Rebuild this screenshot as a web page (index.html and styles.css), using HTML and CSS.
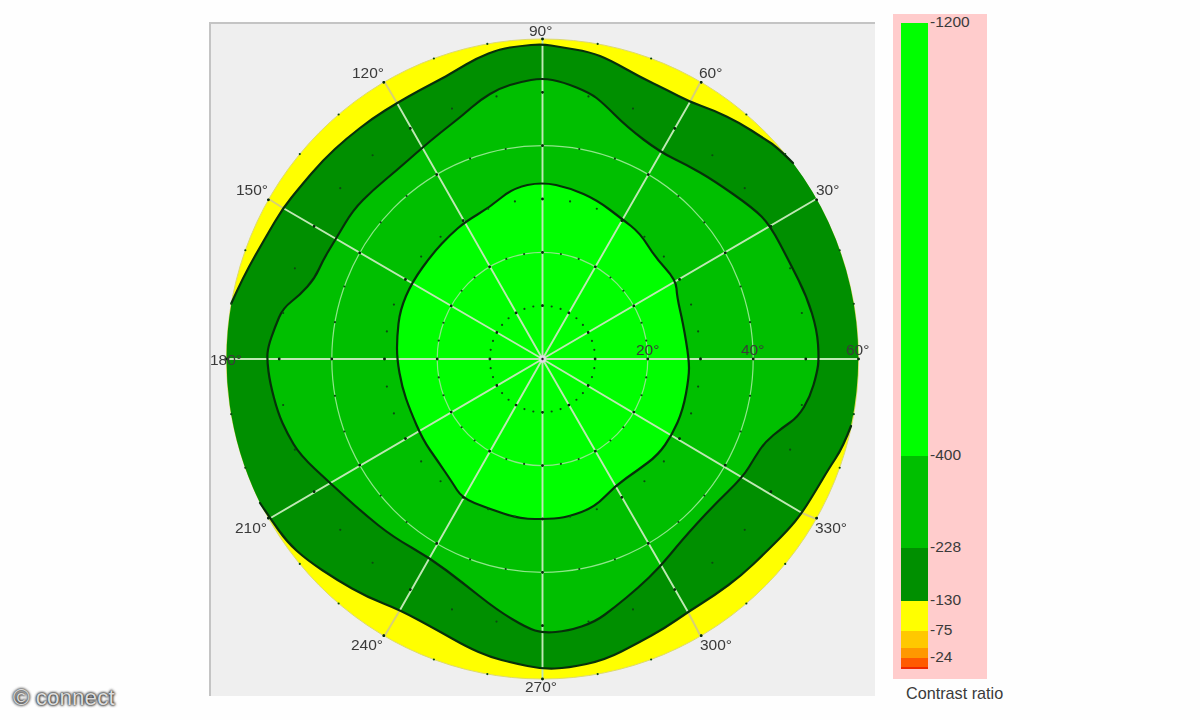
FILE: index.html
```html
<!DOCTYPE html>
<html lang="en">
<head>
<meta charset="utf-8">
<title>Contrast ratio polar plot</title>
<link rel="stylesheet" href="styles.css">
</head>
<body>
<main class="page">
  <figure class="plot">
    <svg class="polar" viewBox="209 22 666 674" width="666" height="674" role="img" aria-label="Polar contrast plot">
      <defs>
        <path id="upper" d="M231.5 303 Q243 277 255 256 Q267 235 275 221.5 Q283 208 291.5 197.5 Q300 187 311.5 173.5 Q323 160 335 149 Q347 138 360 128 Q373 118 385 110.5 Q397 103 408.5 96.5 Q420 90 431.5 84 Q443 78 449 74.5 Q455 71 466 64.5 Q477 58 488.5 53.5 Q500 49 510 47.5 Q520 46 531 45 Q542 44 551 45.5 Q560 47 575 49.5 Q590 52 600 56 Q610 60 625 68.5 Q640 77 653.5 83.5 Q667 90 678.5 96 Q690 102 701.5 106 Q713 110 726.5 116.5 Q740 123 751.5 130.5 Q763 138 770 142.5 Q777 147 793 163"/>
        <path id="lower" d="M851 426 Q843 447 835.5 458.5 Q828 470 823 478.5 Q818 487 810 500 Q802 513 795 521.5 Q788 530 776.5 541.5 Q765 553 753.5 564 Q742 575 728.5 585 Q715 595 701.5 603.5 Q688 612 676.5 620 Q665 628 651.5 635.5 Q638 643 621.5 651.5 Q605 660 586.5 664 Q568 668 555 668.5 Q542 669 527.5 666 Q513 663 501.5 660 Q490 657 478.5 652 Q467 647 452 638.5 Q437 630 418.5 620 Q400 610 383.5 603.5 Q367 597 352 588.5 Q337 580 322 570 Q307 560 297 551 Q287 542 278.5 530 Q270 518 260 503"/>
        <path id="middle" d="M552.5 80 Q542 78 531 80 Q520 82 510 85 Q500 88 490 94 Q480 100 471.5 107.5 Q463 115 451.5 124 Q440 133 431 140.5 Q422 148 409.5 159 Q397 170 385 180 Q373 190 363 200 Q353 210 345 223.5 Q337 237 330 248.5 Q323 260 319 269 Q315 278 307.5 286.5 Q300 295 291.5 301.5 Q283 308 279 317.5 Q275 327 271.5 337 Q268 347 267.5 353.5 Q267 360 268.5 371.5 Q270 383 274 398 Q278 413 282.5 423 Q287 433 293.5 444 Q300 455 315 469 Q330 483 346.5 498 Q363 513 378 525 Q393 537 411.5 547.5 Q430 558 446.5 570.5 Q463 583 480 596.5 Q497 610 512 619 Q527 628 535 630.5 Q543 633 555.5 632 Q568 631 581.5 626.5 Q595 622 605 614.5 Q615 607 626.5 597.5 Q638 588 649 577.5 Q660 567 671 553.5 Q682 540 697 523.5 Q712 507 727.5 492 Q743 477 749 467 Q755 457 760 449.5 Q765 442 773.5 435 Q782 428 790 422.5 Q798 417 804 407 Q810 397 813.5 385 Q817 373 818 365.5 Q819 358 818 344 Q817 330 812 313.5 Q807 297 798.5 280 Q790 263 780 244 Q770 225 761.5 216.5 Q753 208 733 194 Q713 180 700 172.5 Q687 165 673.5 158.5 Q660 152 643.5 139.5 Q627 127 615 115 Q603 103 596.5 98 Q590 93 576.5 87.5 Q563 82 552.5 80 Z"/>
        <path id="inner" d="M556 185 Q542 182 527.5 185 Q513 188 501.5 197.5 Q490 207 477.5 214.5 Q465 222 457.5 228.5 Q450 235 441.5 244 Q433 253 422.5 267.5 Q412 282 406 296 Q400 310 398.5 323.5 Q397 337 397 348 Q397 359 399.5 373 Q402 387 406 398.5 Q410 410 416.5 425 Q423 440 430 450 Q437 460 444.5 471 Q452 482 457 490 Q462 498 474.5 503 Q487 508 503.5 513.5 Q520 519 535 519 Q550 519 559 518 Q568 517 581.5 512 Q595 507 605 496.5 Q615 486 626.5 478 Q638 470 648 462.5 Q658 455 665 445 Q672 435 677.5 422.5 Q683 410 686 393.5 Q689 377 689 368 Q689 359 686 341 Q683 323 680 310 Q677 297 676.5 288.5 Q676 280 665.5 268.5 Q655 257 647.5 245 Q640 233 631 226 Q622 219 609.5 209.5 Q597 200 583.5 194 Q570 188 556 185 Z"/>
      </defs>

      <ellipse class="disc" cx="542.5" cy="359" rx="316" ry="320"/>
      <path class="band-dark" d="M231.5 303 Q243 277 255 256 Q267 235 275 221.5 Q283 208 291.5 197.5 Q300 187 311.5 173.5 Q323 160 335 149 Q347 138 360 128 Q373 118 385 110.5 Q397 103 408.5 96.5 Q420 90 431.5 84 Q443 78 449 74.5 Q455 71 466 64.5 Q477 58 488.5 53.5 Q500 49 510 47.5 Q520 46 531 45 Q542 44 551 45.5 Q560 47 575 49.5 Q590 52 600 56 Q610 60 625 68.5 Q640 77 653.5 83.5 Q667 90 678.5 96 Q690 102 701.5 106 Q713 110 726.5 116.5 Q740 123 751.5 130.5 Q763 138 770 142.5 Q777 147 793 163 A316 320 0 0 1 851 426 Q843 447 835.5 458.5 Q828 470 823 478.5 Q818 487 810 500 Q802 513 795 521.5 Q788 530 776.5 541.5 Q765 553 753.5 564 Q742 575 728.5 585 Q715 595 701.5 603.5 Q688 612 676.5 620 Q665 628 651.5 635.5 Q638 643 621.5 651.5 Q605 660 586.5 664 Q568 668 555 668.5 Q542 669 527.5 666 Q513 663 501.5 660 Q490 657 478.5 652 Q467 647 452 638.5 Q437 630 418.5 620 Q400 610 383.5 603.5 Q367 597 352 588.5 Q337 580 322 570 Q307 560 297 551 Q287 542 278.5 530 Q270 518 260 503 A316 320 0 0 1 231.5 303 Z"/>
      <use href="#middle" class="band-mid"/>
      <use href="#inner" class="band-light"/>

      <ellipse class="ring" cx="542.5" cy="359" rx="105.3" ry="106.6"/>
      <ellipse class="ring" cx="542.5" cy="359" rx="210.7" ry="213.3"/>

      <path class="spokes" d="M542.5 359 L858.5 359 M542.5 359 L816.2 199 M542.5 359 L690 102 M542.5 359 L542.5 39 M542.5 359 L397 103 M542.5 359 L283 208 M542.5 359 L226.5 359 M542.5 359 L268.8 519 M542.5 359 L400 610 M542.5 359 L542.5 679 M542.5 359 L688 612 M542.5 359 L802 513"/>
      <path class="spokes-yellow" d="M700.5 82 L690 102 M384.5 82 L397 103 M268.8 199 L283 208 M384.5 636 L400 610 M700.5 636 L688 612 M816.2 519 L802 513"/>

      <use href="#upper" class="contour"/>
      <use href="#lower" class="contour"/>
      <use href="#middle" class="contour"/>
      <use href="#inner" class="contour"/>

      <g class="dots">
        <ellipse cx="542.5" cy="359" rx="52.6" ry="53.3" pathLength="36"/>
        <ellipse cx="542.5" cy="359" rx="105.3" ry="106.6" pathLength="36"/>
        <ellipse cx="542.5" cy="359" rx="158" ry="160" pathLength="36"/>
        <ellipse cx="542.5" cy="359" rx="210.7" ry="213.3" pathLength="36"/>
        <ellipse cx="542.5" cy="359" rx="263.3" ry="266.7" pathLength="36"/>
        <ellipse cx="542.5" cy="359" rx="316" ry="320" pathLength="36"/>
      </g>
      <g class="dots dots-major">
        <ellipse cx="542.5" cy="359" rx="52.6" ry="53.3" pathLength="12"/>
        <ellipse cx="542.5" cy="359" rx="105.3" ry="106.6" pathLength="12"/>
        <ellipse cx="542.5" cy="359" rx="158" ry="160" pathLength="12"/>
        <ellipse cx="542.5" cy="359" rx="210.7" ry="213.3" pathLength="12"/>
        <ellipse cx="542.5" cy="359" rx="263.3" ry="266.7" pathLength="12"/>
        <ellipse cx="542.5" cy="359" rx="316" ry="320" pathLength="12"/>
      </g>
      <circle class="hub" cx="542.5" cy="359" r="3.5"/>
      <circle class="hub-dot" cx="542.5" cy="359" r="1.2"/>

      <g class="labels">
        <text x="529" y="36">90°</text>
        <text x="352" y="78">120°</text>
        <text x="699" y="78">60°</text>
        <text x="236" y="195">150°</text>
        <text x="816" y="195">30°</text>
        <text x="210" y="365">180°</text>
        <text x="636" y="355">20°</text>
        <text x="741" y="355">40°</text>
        <text x="846" y="355">60°</text>
        <text x="235" y="533">210°</text>
        <text x="815" y="533">330°</text>
        <text x="351" y="650">240°</text>
        <text x="700" y="650">300°</text>
        <text x="525" y="692">270°</text>
      </g>
    </svg>
  </figure>

  <aside class="legend">
    <div class="legend-panel">
      <div class="scale">
        <div class="step step-1200"><i class="swatch"></i><span class="tick">-1200</span></div>
        <div class="step step-400"><i class="swatch"></i><span class="tick">-400</span></div>
        <div class="step step-228"><i class="swatch"></i><span class="tick">-228</span></div>
        <div class="step step-130"><i class="swatch"></i><span class="tick">-130</span></div>
        <div class="step step-75"><i class="swatch"></i><span class="tick">-75</span></div>
        <div class="step step-40"><i class="swatch"></i></div>
        <div class="step step-24"><i class="swatch"></i><span class="tick">-24</span></div>
        <div class="step step-0"><i class="swatch"></i></div>
      </div>
    </div>
    <p class="legend-title">Contrast ratio</p>
  </aside>

  <p class="watermark">© connect</p>
</main>
</body>
</html>
```
FILE: styles.css
```css
* { box-sizing: border-box; }
html, body { margin: 0; padding: 0; background: #fefefe; }
body { font-family: "Liberation Sans", Arial, sans-serif; }

.page {
  position: relative;
  width: 1200px;
  height: 720px;
  overflow: hidden;
  display: flex;
  align-items: flex-start;
  padding: 14px 0 0 209px;
  gap: 18px;
}

.plot {
  margin: 8px 0 0;
  width: 666px;
  height: 674px;
  background: #efefef;
  border-left: 2px solid #c4c4c4;
  border-top: 2px solid #c4c4c4;
  position: relative;
  flex: none;
}
.polar { display: block; margin: -2px 0 0 -2px; filter: blur(0.35px); }

.disc { fill: #ffff00; stroke: #dcd870; stroke-width: 1; }
.band-dark { fill: #008f00; }
.band-mid { fill: #00bf00; }
.band-light { fill: #00ff00; }
.ring { fill: none; stroke: #8fe68a; stroke-width: 1.2; }
.spokes { fill: none; stroke: #bfe8b4; stroke-width: 1.9; }
.spokes-yellow { fill: none; stroke: #d8d074; stroke-width: 2; }
.contour { fill: none; stroke: #06300a; stroke-width: 2.2; stroke-linejoin: round; stroke-linecap: round; }
.dots ellipse { fill: none; stroke: #0c4a12; stroke-width: 2.2; stroke-linecap: round; stroke-dasharray: 0 1; }
.dots-major ellipse { stroke: #08280c; stroke-width: 2.8; }
.hub { fill: #e0dae6; }
.hub-dot { fill: #222; }
.labels text { font-family: "Liberation Sans", Arial, sans-serif; font-size: 15.5px; fill: #3a3a3a; }

.legend {
  width: 94px;
  flex: none;
  display: flex;
  flex-direction: column;
}
.legend-panel {
  width: 94px;
  height: 665px;
  background: #ffcccc;
  padding: 9px 0 0 8px;
}
.scale { display: flex; flex-direction: column; }
.step { display: flex; align-items: flex-start; }
.swatch { display: block; width: 27px; height: 100%; flex: none; }
.tick {
  font-size: 15.5px;
  line-height: 0;
  height: 0;
  margin: -1px 0 0 2px;
  color: #3a3a3a;
  white-space: nowrap;
}
.step-1200 { height: 433px; } .step-1200 .swatch { background: #00ff00; }
.step-400 { height: 92px; } .step-400 .swatch { background: #00bf00; }
.step-228 { height: 53px; } .step-228 .swatch { background: #008f00; }
.step-130 { height: 30px; } .step-130 .swatch { background: #ffff00; }
.step-75 { height: 17px; } .step-75 .swatch { background: #ffc800; }
.step-40 { height: 10px; } .step-40 .swatch { background: #ff9800; }
.step-24 { height: 9px; } .step-24 .swatch { background: #ff5a00; }
.step-0 { height: 2px; } .step-0 .swatch { background: #f02800; }

.legend-title {
  margin: 5px 0 0 13px;
  font-size: 16.2px;
  line-height: 18px;
  color: #3a3a3a;
  white-space: nowrap;
}

.watermark {
  position: absolute;
  left: 13px;
  top: 686px;
  margin: 0;
  font-size: 22.5px;
  line-height: 24px;
  color: #dcdcdc;
  text-shadow: 0 0 3px #333, 0 0 3px #333, 0 0 2px #333;
  white-space: nowrap;
}
```
